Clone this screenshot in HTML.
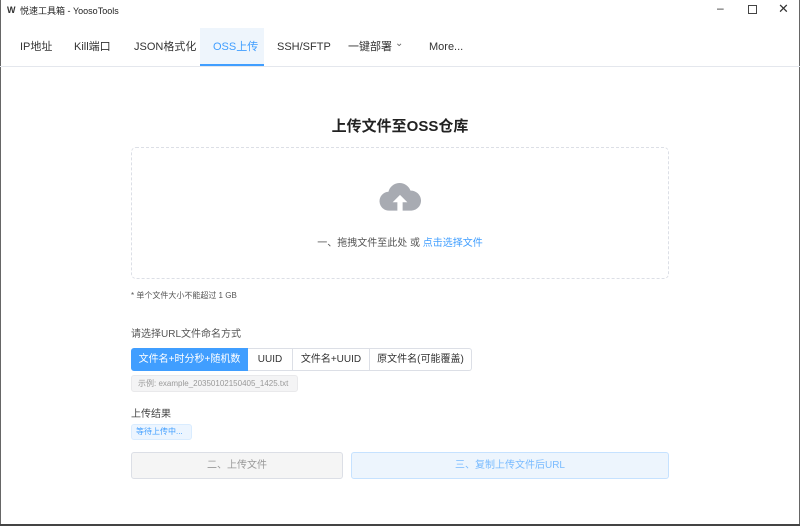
<!DOCTYPE html>
<html><head><meta charset="utf-8"><style>
*{margin:0;padding:0;box-sizing:border-box}
body{width:800px;height:526px;overflow:hidden;background:#fff;font-family:"Liberation Sans","Noto Sans CJK SC",sans-serif;color:#333;position:relative}
.a{position:absolute;white-space:nowrap}
.tab{position:absolute;top:28px;height:38px;line-height:38px;font-size:11px;color:#333}
</style></head><body>
<div class="a" style="left:0;top:0;width:1px;height:526px;background:#666"></div>
<div class="a" style="right:0;top:0;width:1px;height:526px;background:#666"></div>
<div class="a" style="left:0;bottom:0;width:800px;height:2px;background:#444"></div>
<div class="a" style="left:7px;top:5px;font-size:9px;font-weight:bold">W</div>
<div class="a" style="left:20px;top:4px;font-size:9px;color:#222">悦速工具箱 - YoosoTools</div>
<div class="a" style="left:717px;top:1px;font-size:12px;color:#333">–</div>
<div class="a" style="left:748px;top:5px;width:9px;height:9px;border:1px solid #444"></div>
<div class="a" style="left:778px;top:1px;font-size:13px;color:#333">✕</div>
<div class="a" style="left:200px;top:28px;width:64px;height:38px;background:#eef5fc;border-bottom:2px solid #409eff"></div>
<div class="a" style="left:0;top:66px;width:800px;height:1px;background:#e4e7ed"></div>
<div class="tab" style="left:20px">IP地址</div>
<div class="tab" style="left:74px">Kill端口</div>
<div class="tab" style="left:134px">JSON格式化</div>
<div class="tab" style="left:213px;color:#409eff">OSS上传</div>
<div class="tab" style="left:277px">SSH/SFTP</div>
<div class="tab" style="left:348px">一键部署</div>
<div class="tab" style="left:395px;top:25px;font-size:10px;color:#666">⌄</div>
<div class="tab" style="left:429px">More...</div>
<div class="a" style="left:0;width:800px;top:115px;text-align:center;font-size:15px;font-weight:bold;color:#222">上传文件至OSS仓库</div>
<div class="a" style="left:131px;top:147px;width:538px;height:132px;border:1px dashed #dcdfe6;border-radius:5px"></div>
<svg class="a" style="left:379px;top:181px" width="42" height="34" viewBox="0 0 40 32"><path d="M10 28 A9 9 0 0 1 9 10 A11 11 0 0 1 30 9 A9.5 9.5 0 0 1 31 28 Z" fill="#a8abb2"/><path d="M20 13 L13 20 H17.5 V31 H22.5 V20 H27 Z" fill="#fff"/></svg>
<div class="a" style="left:0;width:800px;top:234px;text-align:center;font-size:10px;color:#555">一、拖拽文件至此处 或 <span style="color:#409eff">点击选择文件</span></div>
<div class="a" style="left:131px;top:290px;font-size:8px;color:#555">* 单个文件大小不能超过 1 GB</div>
<div class="a" style="left:131px;top:325px;font-size:10px;color:#555">请选择URL文件命名方式</div>
<div class="a" style="left:131px;top:348px;height:23px;display:flex;font-size:10px;line-height:21px">
<div style="width:117px;background:#409eff;color:#fff;text-align:center;border:1px solid #409eff;border-radius:3px 0 0 3px">文件名+时分秒+随机数</div>
<div style="width:45px;border:1px solid #dcdfe6;border-left:0;text-align:center">UUID</div>
<div style="width:77px;border:1px solid #dcdfe6;border-left:0;text-align:center">文件名+UUID</div>
<div style="width:102px;border:1px solid #dcdfe6;border-left:0;text-align:center;border-radius:0 3px 3px 0">原文件名(可能覆盖)</div>
</div>
<div class="a" style="left:131px;top:375px;width:167px;height:17px;background:#f4f4f5;border:1px solid #e9e9eb;border-radius:3px;font-size:8px;line-height:15px;color:#999;padding-left:6px">示例: example_20350102150405_1425.txt</div>
<div class="a" style="left:131px;top:405px;font-size:10px;color:#444">上传结果</div>
<div class="a" style="left:131px;top:424px;width:61px;height:16px;background:#ecf5ff;border:1px solid #d9ecff;border-radius:3px;font-size:8px;line-height:14px;color:#409eff;padding-left:4px">等待上传中...</div>
<div class="a" style="left:131px;top:452px;width:212px;height:27px;background:#f5f5f5;border:1px solid #dcdfe6;border-radius:3px;text-align:center;line-height:25px;font-size:10px;color:#999">二、上传文件</div>
<div class="a" style="left:351px;top:452px;width:318px;height:27px;background:#edf5fd;border:1px solid #c6e2ff;border-radius:3px;text-align:center;line-height:25px;font-size:10px;color:#79bbff">三、复制上传文件后URL</div>
</body></html>
